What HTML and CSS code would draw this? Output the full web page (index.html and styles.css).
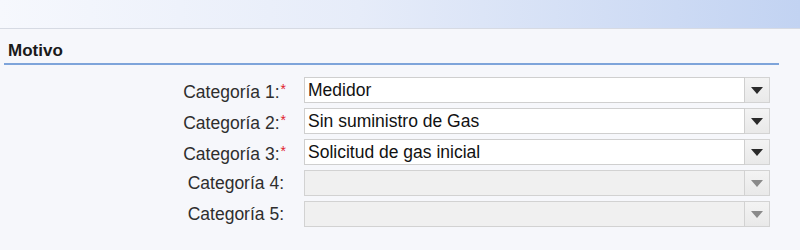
FILE: index.html
```html
<!DOCTYPE html>
<html lang="es">
<head>
<meta charset="utf-8">
<title>Motivo</title>
<link rel="stylesheet" href="styles.css">
</head>
<body>
<div class="topbar"></div>
<section class="panel">
  <h2 class="panel-title">Motivo</h2>
  <div class="form">
    <div class="row">
      <label class="label">Categoría 1:<span class="req">*</span></label>
      <div class="combo">
        <div class="field">Medidor</div>
        <div class="btn"><span class="arrow"></span></div>
      </div>
    </div>
    <div class="row">
      <label class="label">Categoría 2:<span class="req">*</span></label>
      <div class="combo">
        <div class="field">Sin suministro de Gas</div>
        <div class="btn"><span class="arrow"></span></div>
      </div>
    </div>
    <div class="row">
      <label class="label">Categoría 3:<span class="req">*</span></label>
      <div class="combo">
        <div class="field">Solicitud de gas inicial</div>
        <div class="btn"><span class="arrow"></span></div>
      </div>
    </div>
    <div class="row">
      <label class="label plain">Categoría 4:</label>
      <div class="combo disabled">
        <div class="field"></div>
        <div class="btn"><span class="arrow"></span></div>
      </div>
    </div>
    <div class="row">
      <label class="label plain">Categoría 5:</label>
      <div class="combo disabled">
        <div class="field"></div>
        <div class="btn"><span class="arrow"></span></div>
      </div>
    </div>
  </div>
</section>
</body>
</html>
```
FILE: styles.css
```css
html, body {
  margin: 0;
  padding: 0;
}
body {
  background: #f6f7fb;
  font-family: "Liberation Sans", Arial, sans-serif;
  color: #333;
  width: 800px;
  height: 250px;
  overflow: hidden;
}
.topbar {
  height: 28px;
  border-bottom: 1px solid #d6dae3;
  background: linear-gradient(to right, #f6f8fd 0%, #e6ecf9 45%, #c2d3f2 100%);
}
.panel {
  margin: 0 21px 0 4px;
}
.panel-title {
  margin: 12px 0 0 0;
  padding: 0 0 2px 4px;
  font-size: 17px;
  line-height: 20px;
  font-weight: bold;
  color: #1a1a1a;
  border-bottom: 2px solid #7ea4da;
}
.form {
  display: flex;
  flex-direction: column;
  gap: 5px;
  margin-top: 12px;
}
.row {
  display: flex;
  align-items: center;
  height: 26px;
}
.label {
  width: 282px;
  margin-right: 18px;
  text-align: right;
  font-size: 17.5px;
  line-height: 20px;
  color: #2e2e2e;
}
.label.plain {
  width: 280px;
  margin-right: 20px;
}
.req {
  color: #e0202c;
  font-size: 14px;
  vertical-align: 4px;
  margin-left: 1px;
}
.combo {
  display: flex;
  height: 26px;
}
.field {
  box-sizing: border-box;
  width: 441px;
  height: 26px;
  border: 1px solid #cfcfcf;
  background: #ffffff;
  padding: 0 3px;
  font-size: 17.5px;
  line-height: 24px;
  color: #111;
}
.btn {
  box-sizing: border-box;
  width: 25px;
  height: 26px;
  border: 1px solid #d3d3d3;
  border-left: none;
  background: linear-gradient(#f3f3f3, #e9e9e9);
  display: flex;
  align-items: center;
  justify-content: center;
}
.arrow {
  width: 0;
  height: 0;
  border-left: 6px solid transparent;
  border-right: 6px solid transparent;
  border-top: 7px solid #2a2a2a;
  margin-top: 1px;
}
.combo.disabled .field {
  background: #f0f0f0;
  border-color: #d2d2d2;
}
.combo.disabled .arrow {
  border-top-color: #8a8a8a;
}
```
